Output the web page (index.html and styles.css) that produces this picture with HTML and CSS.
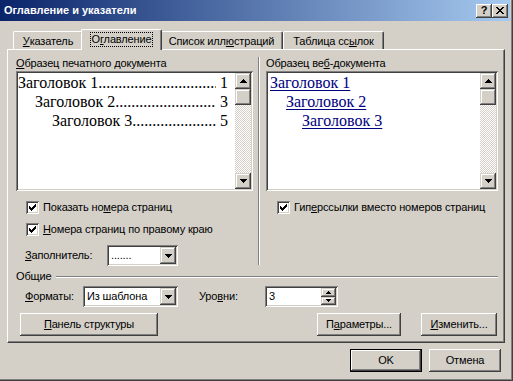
FILE: index.html
```html
<!DOCTYPE html>
<html lang="ru">
<head>
<meta charset="utf-8">
<link rel="stylesheet" href="styles.css">
</head>
<body>
<div class="window">
  <div class="titlebar">
    <span class="title">Оглавление и указатели</span>
    <span class="tbtn">?</span>
    <span class="tbtn"><svg width="8" height="7" viewBox="0 0 8 7"><path d="M0 0h2v1H0zM6 0h2v1H6zM1 1h2v1H1zM5 1h2v1H5zM2 2h4v1H2zM3 3h2v1H3zM2 4h4v1H2zM1 5h2v1H1zM5 5h2v1H5zM0 6h2v1H0zM6 6h2v1H6z"/></svg></span>
  </div>
  <div class="content">
    <div class="tabs">
      <div class="tab t1"><u>У</u>казатель</div>
      <div class="tab t2 active"><span class="focus">О<u>г</u>лавление</span></div>
      <div class="tab t3">Список илл<u>ю</u>страций</div>
      <div class="tab t4">Таблица сс<u>ы</u>лок</div>
    </div>
    <div class="panel">
      <div class="top">
        <div class="col-left">
          <div class="label"><u>О</u>бразец печатного документа</div>
          <div class="preview">
            <div class="list">
              <div class="row"><span>Заголовок 1</span><span class="dots"></span><span class="num">1</span></div>
              <div class="row l2"><span>Заголовок 2</span><span class="dots"></span><span class="num">3</span></div>
              <div class="row l3"><span>Заголовок 3</span><span class="dots"></span><span class="num">5</span></div>
            </div>
            <div class="vscroll">
              <div class="sbtn"><svg width="7" height="4" viewBox="0 0 7 4"><path d="M3 0h1v1H3zM2 1h3v1H2zM1 2h5v1H1zM0 3h7v1H0z"/></svg></div>
              <div class="sbtn thumb"></div>
              <div class="track"></div>
              <div class="sbtn"><svg width="7" height="4" viewBox="0 0 7 4"><path d="M0 0h7v1H0zM1 1h5v1H1zM2 2h3v1H2zM3 3h1v1H3z"/></svg></div>
            </div>
          </div>
          <div class="chk first"><span class="box"><svg width="7" height="7" viewBox="0 0 7 7"><path d="M6 0h1v1H6zM5 1h2v1H5zM0 2h1v1H0zM4 2h3v1H4zM0 3h2v1H0zM3 3h3v1H3zM0 4h5v1H0zM1 5h3v1H1zM2 6h1v1H2z"/></svg></span><span class="ctext">Показать но<u>м</u>ера страниц</span></div>
          <div class="chk second"><span class="box"><svg width="7" height="7" viewBox="0 0 7 7"><path d="M6 0h1v1H6zM5 1h2v1H5zM0 2h1v1H0zM4 2h3v1H4zM0 3h2v1H0zM3 3h3v1H3zM0 4h5v1H0zM1 5h3v1H1zM2 6h1v1H2z"/></svg></span><span class="ctext"><u>Н</u>омера страниц по правому краю</span></div>
          <div class="frow fill">
            <span class="flabel w-fill"><u>З</u>аполнитель:</span>
            <div class="combo c-fill"><span class="val">.......</span><span class="dd"><svg width="7" height="4" viewBox="0 0 7 4"><path d="M0 0h7v1H0zM1 1h5v1H1zM2 2h3v1H2zM3 3h1v1H3z"/></svg></span></div>
          </div>
        </div>
        <div class="sep"></div>
        <div class="col-right">
          <div class="label">Образец ве<u>б</u>-документа</div>
          <div class="preview">
            <div class="list web">
              <div class="row"><a>Заголовок 1</a></div>
              <div class="row w2"><a>Заголовок 2</a></div>
              <div class="row w3"><a>Заголовок 3</a></div>
            </div>
            <div class="vscroll">
              <div class="sbtn"><svg width="7" height="4" viewBox="0 0 7 4"><path d="M3 0h1v1H3zM2 1h3v1H2zM1 2h5v1H1zM0 3h7v1H0z"/></svg></div>
              <div class="sbtn thumb"></div>
              <div class="track"></div>
              <div class="sbtn"><svg width="7" height="4" viewBox="0 0 7 4"><path d="M0 0h7v1H0zM1 1h5v1H1zM2 2h3v1H2zM3 3h1v1H3z"/></svg></div>
            </div>
          </div>
          <div class="chk first rchk"><span class="box"><svg width="7" height="7" viewBox="0 0 7 7"><path d="M6 0h1v1H6zM5 1h2v1H5zM0 2h1v1H0zM4 2h3v1H4zM0 3h2v1H0zM3 3h3v1H3zM0 4h5v1H0zM1 5h3v1H1zM2 6h1v1H2z"/></svg></span><span class="ctext">Гип<u>е</u>рссылки вместо номеров страниц</span></div>
        </div>
      </div>
      <div class="general">
        <div class="ghead"><span>Общие</span><span class="gline"></span></div>
        <div class="frow formats">
          <span class="flabel w-fmt"><u>Ф</u>орматы:</span>
          <div class="combo c-fmt"><span class="val">Из шаблона</span><span class="dd"><svg width="7" height="4" viewBox="0 0 7 4"><path d="M0 0h7v1H0zM1 1h5v1H1zM2 2h3v1H2zM3 3h1v1H3z"/></svg></span></div>
          <span class="flabel w-lvl">Уро<u>в</u>ни:</span>
          <div class="spin"><span class="val">3</span><span class="sbtns"><span class="sp"><svg width="5" height="3" viewBox="0 0 5 3"><path d="M2 0h1v1H2zM1 1h3v1H1zM0 2h5v1H0z"/></svg></span><span class="sp"><svg width="5" height="3" viewBox="0 0 5 3"><path d="M0 0h5v1H0zM1 1h3v1H1zM2 2h1v1H2z"/></svg></span></span></div>
        </div>
        <div class="brow">
          <span class="btn b-struct"><u>П</u>анель структуры</span>
          <span class="spacer"></span>
          <span class="btn b-params">П<u>а</u>раметры...</span>
          <span class="btn b-edit"><u>И</u>зменить...</span>
        </div>
      </div>
    </div>
    <div class="footer">
      <span class="btn default">OK</span>
      <span class="btn">Отмена</span>
    </div>
  </div>
</div>
</body>
</html>
```
FILE: styles.css
```css
* { box-sizing: border-box; margin: 0; padding: 0; }
body { font: 11px/13px "Liberation Sans", Arial, sans-serif; letter-spacing: -0.15px; color: #000; background: #d4d0c8; }
u { text-decoration: underline; text-underline-offset: 1px; }

.window {
  width: 513px; height: 381px; background: #d4d0c8;
  box-shadow: inset -1px -1px #404040, inset -2px -2px #808080;
  padding-right: 3px; overflow: hidden;
}
.titlebar {
  height: 21px; display: flex; align-items: center;
  padding: 0 2px 0 4px;
  background: linear-gradient(90deg, #0a246a, #a6caf0);
}
.title { flex: 1; color: #fff; font-weight: bold; letter-spacing: 0; }
.tbtn {
  width: 16px; height: 14px; display: flex; align-items: center; justify-content: center;
  background: #d4d0c8; font-weight: bold; font-size: 11px; line-height: 11px;
  box-shadow: inset -1px -1px #404040, inset 1px 1px #fff, inset -2px -2px #808080;
}

.content { padding: 8px 0 0 7px; }
.tabs { display: flex; align-items: flex-end; height: 21px; margin-bottom: -1px; padding-left: 6px; position: relative; z-index: 1; }
.tab {
  height: 18px; margin-bottom: 1px; display: flex; align-items: center; justify-content: center;
  border-top: 1px solid #fff; border-left: 1px solid #fff; border-right: 1px solid #404040;
  box-shadow: inset -1px 0 #808080; border-radius: 2px 2px 0 0; background: #d4d0c8;
  white-space: nowrap; padding-top: 1px;
}
.t1 { width: 70px; }
.t2 { width: 81px; }
.t3 { width: 123px; }
.t4 { width: 101px; }
.tab.active { height: 21px; margin: 0 -2px; position: relative; z-index: 2; padding-top: 0; padding-bottom: 1px; }
.focus { outline: 1px dotted #000; padding: 0 1px; }

.panel {
  width: 498px; height: 294px;
  border: 1px solid; border-color: #fff #404040 #404040 #fff;
  box-shadow: inset -1px -1px #808080;
  padding: 7px 0 0 8px;
}
.top { display: flex; height: 209px; }
.col-left { width: 237px; }
.col-right { width: 232px; }
.sep { width: 2px; height: 208px; margin: 0 6px 0 5px; border-left: 1px solid #808080; border-right: 1px solid #fff; }
.label { height: 13px; margin-bottom: 1px; white-space: nowrap; }

.preview {
  height: 120px; display: flex; padding: 2px; background: #fff;
  box-shadow: inset 1px 1px #808080, inset -1px -1px #fff, inset 2px 2px #404040, inset -2px -2px #d4d0c8;
}
.list { flex: 1; padding: 0 7px 0 0; font: 16px/19px "Liberation Serif", "Times New Roman", serif; letter-spacing: 0; overflow: hidden; }
.row { display: flex; white-space: nowrap; }
.l2 { padding-left: 17px; }
.l3 { padding-left: 34px; }
.dots { flex: 1; overflow: hidden; }
.dots::before { content: "................................................................"; }
.num { margin-left: 4px; }
.web { padding-left: 2px; }
.web a { color: #000080; text-decoration: underline; text-underline-offset: 2px; }
.w2 { padding-left: 16px; }
.w3 { padding-left: 32px; }

.vscroll { width: 16px; display: flex; flex-direction: column; }
.sbtn {
  height: 16px; display: flex; align-items: center; justify-content: center; background: #d4d0c8;
  box-shadow: inset -1px -1px #404040, inset 1px 1px #d4d0c8, inset -2px -2px #808080, inset 2px 2px #fff;
}
.track { flex: 1; background: repeating-conic-gradient(#fff 0 25%, #d4d0c8 0 50%) 0 0 / 2px 2px; }

.chk { display: flex; align-items: center; height: 14px; padding-left: 10px; white-space: nowrap; }
.chk.first { margin-top: 9px; }
.chk.second { margin-top: 8px; }
.rchk { padding-left: 11px; }
.box {
  width: 13px; height: 13px; padding: 3px; background: #fff; display: flex; flex: none;
  box-shadow: inset 1px 1px #808080, inset -1px -1px #fff, inset 2px 2px #404040, inset -2px -2px #d4d0c8;
}
.ctext { margin-left: 4px; }

.frow { display: flex; align-items: center; height: 21px; padding-left: 9px; white-space: nowrap; }
.fill { margin-top: 9px; }
.flabel { flex: none; }
.w-fill { width: 82px; }
.w-fmt { width: 58px; }
.w-lvl { width: 66px; margin-left: 21px; }
.combo, .spin {
  display: flex; height: 21px; padding: 2px; background: #fff; flex: none;
  box-shadow: inset 1px 1px #808080, inset -1px -1px #fff, inset 2px 2px #404040, inset -2px -2px #d4d0c8;
}
.c-fill { width: 71px; }
.c-fmt { width: 95px; }
.spin { width: 73px; }
.val { flex: 1; padding-left: 2px; display: flex; align-items: center; }
.dd {
  width: 16px; display: flex; align-items: center; justify-content: center; background: #d4d0c8;
  box-shadow: inset -1px -1px #404040, inset 1px 1px #d4d0c8, inset -2px -2px #808080, inset 2px 2px #fff;
}
.sbtns { width: 15px; display: flex; flex-direction: column; }
.sp {
  flex: 1; display: flex; align-items: center; justify-content: center; background: #d4d0c8;
  box-shadow: inset -1px -1px #404040, inset 1px 1px #d4d0c8, inset -2px -2px #808080, inset 2px 2px #fff;
}

.general { width: 482px; }
.ghead { display: flex; align-items: center; height: 13px; margin-top: 4px; }
.gline { flex: 1; height: 2px; margin-left: 5px; border-top: 1px solid #808080; border-bottom: 1px solid #fff; }
.formats { margin-top: 3px; }

.brow { display: flex; margin-top: 6px; padding-left: 4px; }
.spacer { flex: 1; }
.btn {
  height: 23px; display: flex; align-items: center; justify-content: center; background: #d4d0c8;
  box-shadow: inset -1px -1px #404040, inset 1px 1px #fff, inset -2px -2px #808080;
  white-space: nowrap; flex: none;
}
.b-struct { width: 138px; }
.b-params { width: 84px; }
.b-edit { width: 76px; margin-left: 20px; margin-right: 1px; }

.footer { display: flex; justify-content: flex-end; gap: 7px; padding: 6px 9px 0 0; }
.footer .btn { width: 72px; }
.btn.default { box-shadow: inset 0 0 0 1px #000, inset -2px -2px #404040, inset 2px 2px #fff, inset -3px -3px #808080; }
```
